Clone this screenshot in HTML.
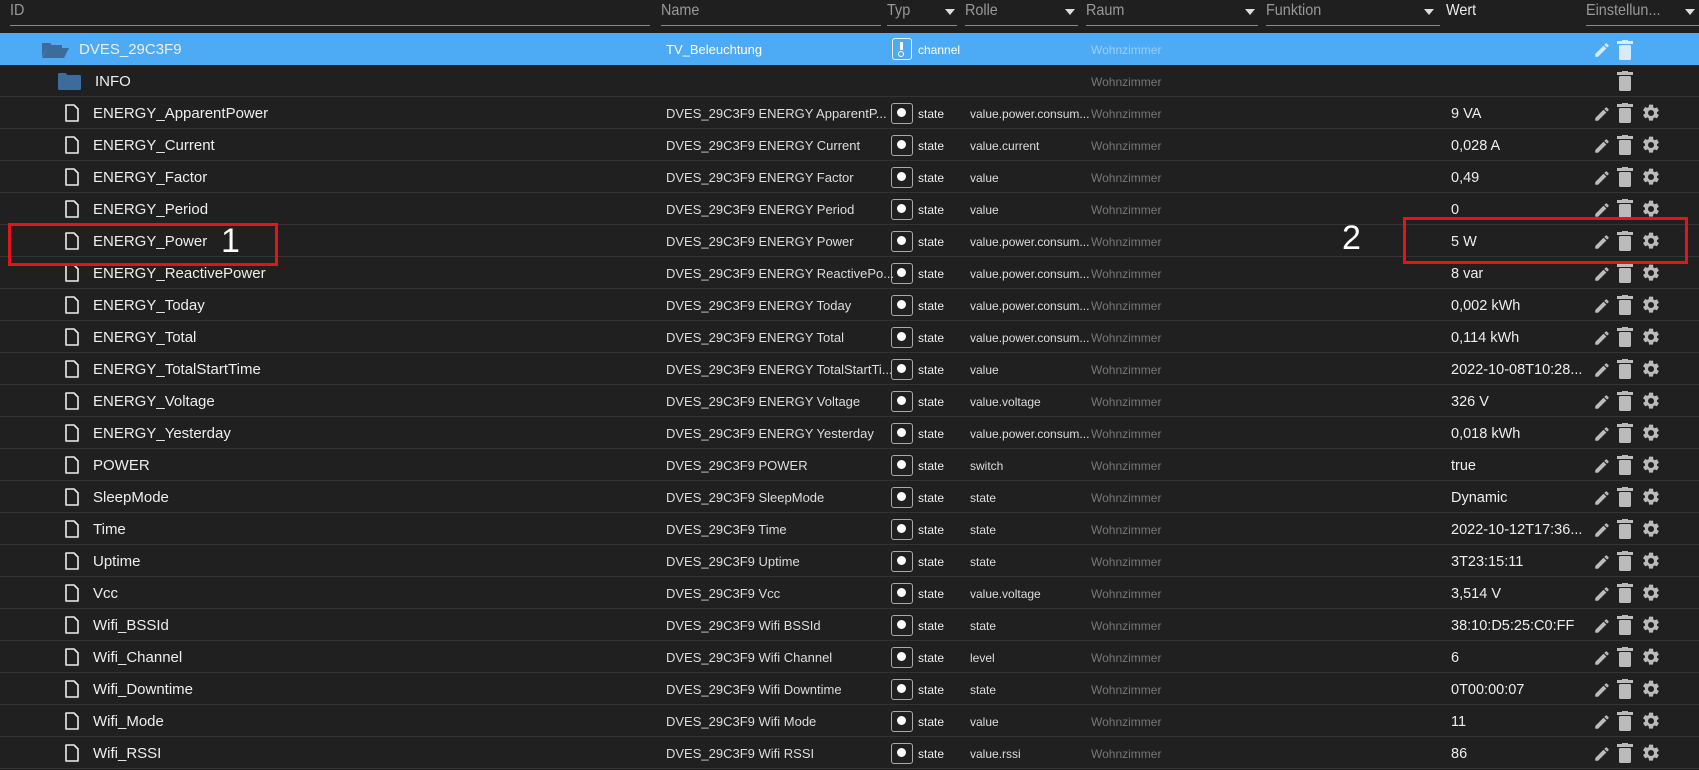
<!DOCTYPE html>
<html><head><meta charset="utf-8"><style>
*{margin:0;padding:0;box-sizing:border-box}
body{width:1699px;height:769px;background:#1f1f1f;font-family:"Liberation Sans",sans-serif;position:relative;overflow:hidden;color:#e8e8e8}
.h{position:absolute;top:0;height:33px;width:1699px;background:#1f1f1f}
.ht{position:absolute;top:2px;font-size:16px;color:#999;transform:scaleX(.9);transform-origin:left}
.hl{position:absolute;top:25px;height:1px;background:#8a8a8a}
.tri{position:absolute;top:9px;width:0;height:0;border-left:5px solid transparent;border-right:5px solid transparent;border-top:6px solid #ddd}
.r{position:absolute;left:0;width:1699px;height:32px;border-bottom:1px solid #343434;background:#202020}
.r span{position:absolute;top:1px;line-height:32px;white-space:nowrap}
.id{font-size:15px;color:#eee}
.nm{left:666px;font-size:13px;color:#ddd}
.ty{left:918px;font-size:12px;color:#eee}
.ro{left:970px;font-size:12px;color:#ddd}
.ra{left:1091px;font-size:12px;color:#777}
.we{left:1451px;font-size:14.5px;color:#eee}
.tb{position:absolute;top:6px;left:891px;width:22px;height:21px;border:1.5px solid #aaa;border-radius:3px}
.tb::after{content:"";position:absolute;left:5px;top:4px;width:9px;height:9px;border-radius:50%;background:#fff}
svg{position:absolute}
.box{position:absolute;border:3px solid #e3141c}
.num{position:absolute;font-size:34px;color:#fff}
</style></head><body>
<div class="h">
<div class="ht" style="left:10px">ID</div>
<div class="hl" style="left:10px;width:640px"></div>
<div class="ht" style="left:661px">Name</div>
<div class="hl" style="left:661px;width:220px"></div>
<div class="ht" style="left:887px">Typ</div><div class="tri" style="left:945px"></div>
<div class="hl" style="left:887px;width:70px"></div>
<div class="ht" style="left:965px">Rolle</div><div class="tri" style="left:1065px"></div>
<div class="hl" style="left:965px;width:113px"></div>
<div class="ht" style="left:1086px">Raum</div><div class="tri" style="left:1245px"></div>
<div class="hl" style="left:1086px;width:172px"></div>
<div class="ht" style="left:1266px">Funktion</div><div class="tri" style="left:1424px"></div>
<div class="hl" style="left:1266px;width:174px"></div>
<div class="ht" style="left:1446px;color:#eee">Wert</div>
<div class="ht" style="left:1586px">Einstellun...</div><div class="tri" style="left:1685px"></div>
<div class="hl" style="left:1586px;width:113px"></div>
</div>

<div class="r" style="top:33px;background:#4dabf5;border:none">
<svg style="left:41px;top:8px" width="28" height="17" viewBox="0 0 28 17"><path d="M1 2h8l2 2h10v3H6L1 16z" fill="#3d6c9c"/><path d="M6 7h22l-5 10H1z" fill="#3d6c9c"/></svg>
<span class="id" style="left:79px">DVES_29C3F9</span>
<span class="nm" style="color:#fff">TV_Beleuchtung</span>
<div style="position:absolute;left:892px;top:5px;width:20px;height:22px;border:1.5px solid #eef;border-radius:3px"><div style="position:absolute;left:7px;top:3px;width:3px;height:8px;background:#fff"></div><div style="position:absolute;left:5px;top:12px;width:6px;height:6px;border:1.5px solid #fff;border-radius:50%"></div></div>
<span class="ty" style="color:#fff">channel</span>
<span class="ra" style="color:#9ccdf7">Wohnzimmer</span>
<svg style="left:1593px;top:8px" width="18" height="18" viewBox="0 0 24 24"><path d="M3 17.25V21h3.75L17.81 9.94l-3.75-3.75zM20.71 7.04a1 1 0 000-1.41l-2.34-2.34a1 1 0 00-1.41 0l-1.83 1.83 3.75 3.75z" fill="#d6ebfb"/></svg>
<svg style="left:1617px;top:7px" width="16" height="20" viewBox="0 0 16 20"><rect x="0" y="1" width="16" height="3" fill="#d6ebfb"/><rect x="5" y="0" width="6" height="2" fill="#d6ebfb"/><rect x="2" y="5" width="12" height="15" rx="1.5" fill="#d6ebfb"/></svg>
</div>
<div class="r" style="top:65px">
<svg style="left:58px;top:8px" width="23" height="17" viewBox="0 0 23 17"><path d="M0 1.5Q0 0 1.5 0h6l2 2h12q1.5 0 1.5 1.5v12q0 1.5-1.5 1.5h-20Q0 17 0 15.5z" fill="#3d6c9c"/></svg>
<span class="id" style="left:95px">INFO</span>
<span class="ra">Wohnzimmer</span>
<svg style="left:1617px;top:6px" width="16" height="20" viewBox="0 0 16 20"><rect x="0" y="1" width="16" height="3" fill="#bbb"/><rect x="5" y="0" width="6" height="2" fill="#bbb"/><rect x="2" y="5" width="12" height="15" rx="1.5" fill="#bbb"/></svg>
</div>

<div id="rows"></div>
<script>
var d=[["ENERGY_ApparentPower","DVES_29C3F9 ENERGY ApparentP...","value.power.consum...","9 VA"],
["ENERGY_Current","DVES_29C3F9 ENERGY Current","value.current","0,028 A"],
["ENERGY_Factor","DVES_29C3F9 ENERGY Factor","value","0,49"],
["ENERGY_Period","DVES_29C3F9 ENERGY Period","value","0"],
["ENERGY_Power","DVES_29C3F9 ENERGY Power","value.power.consum...","5 W"],
["ENERGY_ReactivePower","DVES_29C3F9 ENERGY ReactivePo...","value.power.consum...","8 var"],
["ENERGY_Today","DVES_29C3F9 ENERGY Today","value.power.consum...","0,002 kWh"],
["ENERGY_Total","DVES_29C3F9 ENERGY Total","value.power.consum...","0,114 kWh"],
["ENERGY_TotalStartTime","DVES_29C3F9 ENERGY TotalStartTi...","value","2022-10-08T10:28..."],
["ENERGY_Voltage","DVES_29C3F9 ENERGY Voltage","value.voltage","326 V"],
["ENERGY_Yesterday","DVES_29C3F9 ENERGY Yesterday","value.power.consum...","0,018 kWh"],
["POWER","DVES_29C3F9 POWER","switch","true"],
["SleepMode","DVES_29C3F9 SleepMode","state","Dynamic"],
["Time","DVES_29C3F9 Time","state","2022-10-12T17:36..."],
["Uptime","DVES_29C3F9 Uptime","state","3T23:15:11"],
["Vcc","DVES_29C3F9 Vcc","value.voltage","3,514 V"],
["Wifi_BSSId","DVES_29C3F9 Wifi BSSId","state","38:10:D5:25:C0:FF"],
["Wifi_Channel","DVES_29C3F9 Wifi Channel","level","6"],
["Wifi_Downtime","DVES_29C3F9 Wifi Downtime","state","0T00:00:07"],
["Wifi_Mode","DVES_29C3F9 Wifi Mode","value","11"],
["Wifi_RSSI","DVES_29C3F9 Wifi RSSI","value.rssi","86"]];
var h="";
d.forEach(function(r,i){var t=97+i*32;
h+='<div class="r" style="top:'+t+'px">'+
'<svg style="left:65px;top:7px" width="14" height="18" viewBox="0 0 14 18"><path d="M1 1h8l4 4v12H1z" fill="none" stroke="#eee" stroke-width="1.6" stroke-linejoin="round"/></svg>'+
'<span class="id" style="left:93px">'+r[0]+'</span><span class="nm">'+r[1]+'</span><div class="tb"></div><span class="ty">state</span><span class="ro">'+r[2]+'</span><span class="ra">Wohnzimmer</span><span class="we">'+r[3]+'</span>'+
'<svg style="left:1593px;top:8px" width="18" height="18" viewBox="0 0 24 24"><path d="M3 17.25V21h3.75L17.81 9.94l-3.75-3.75zM20.71 7.04a1 1 0 000-1.41l-2.34-2.34a1 1 0 00-1.41 0l-1.830 1.83 3.75 3.75z" fill="#bbb"/></svg>'+
'<svg style="left:1617px;top:6px" width="16" height="20" viewBox="0 0 16 20"><rect x="0" y="1" width="16" height="3" fill="#bbb"/><rect x="5" y="0" width="6" height="2" fill="#bbb"/><rect x="2" y="5" width="12" height="15" rx="1.5" fill="#bbb"/></svg>'+
'<svg style="left:1641px;top:6px" width="20" height="20" viewBox="0 0 24 24"><path d="M19.14 12.94c.04-.3.06-.61.06-.94s-.02-.64-.07-.94l2.03-1.58a.49.49 0 00.12-.61l-1.92-3.32a.49.49 0 00-.59-.22l-2.39.96a7 7 0 00-1.62-.94l-.36-2.54A.48.48 0 0013.920 2h-3.84a.48.48 0 00-.48.41l-.36 2.54a7.4 7.4 0 00-1.62.94l-2.39-.96a.48.48 0 00-.59.22L2.720 8.47a.47.47 0 00.12.61l2.03 1.58c-.05.3-.07.62-.07.94s.02.64.07.94l-2.03 1.58a.49.49 0 00-.12.61l1.92 3.32c.12.22.37.29.59.22l2.39-.96c.5.38 1.03.7 1.62.94l.36 2.54c.05.24.24.41.48.41h3.84c.24 0 .44-.17.47-.41l.36-2.54a7 7 0 001.62-.94l2.39.96c.22.08.47 0 .59-.22l1.92-3.32a.46.46 0 00-.12-.61zM12 15.6A3.6 3.6 0 1115.6 12 3.6 3.6 0 0112 15.6z" fill="#bbb"/></svg>'+
'</div>';});
document.getElementById("rows").innerHTML=h;
</script>
<div class="box" style="left:8px;top:223px;width:270px;height:43px"></div>
<div class="num" style="left:221px;top:222px">1</div>
<div class="box" style="left:1403px;top:217px;width:285px;height:47px"></div>
<div class="num" style="left:1342px;top:219px">2</div>
</body></html>
